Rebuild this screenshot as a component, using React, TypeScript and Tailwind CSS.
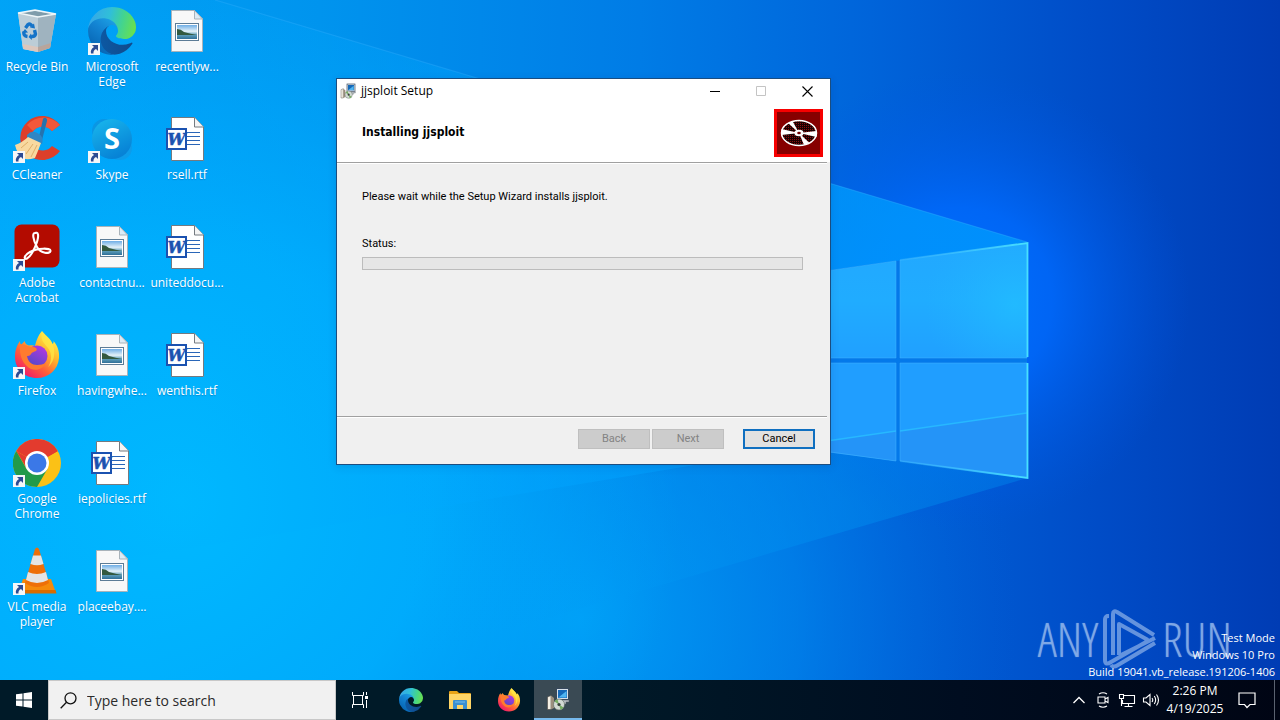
import type { ReactNode } from "react";

const ui = "font-['Open_Sans','Noto_Sans',sans-serif]";

function Wallpaper() {
  return (
    <svg className="absolute inset-0 h-full w-full" viewBox="0 0 1280 720" preserveAspectRatio="none" aria-hidden="true">
      <defs>
        <linearGradient id="wBase" x1="0" y1="0" x2="1280" y2="0" gradientUnits="userSpaceOnUse">
          <stop offset="0" stopColor="#00a2f6" />
          <stop offset="0.25" stopColor="#0094ee" />
          <stop offset="0.5" stopColor="#007ce6" />
          <stop offset="0.68" stopColor="#0064da" />
          <stop offset="0.85" stopColor="#004dc8" />
          <stop offset="1" stopColor="#003cb4" />
        </linearGradient>
        <radialGradient id="wLeft" cx="180" cy="500" r="500" gradientUnits="userSpaceOnUse">
          <stop offset="0" stopColor="#00b9ff" />
          <stop offset="0.5" stopColor="#00b2ff" stopOpacity="0.8" />
          <stop offset="1" stopColor="#00a8ff" stopOpacity="0" />
        </radialGradient>
        <radialGradient id="wBottom" cx="580" cy="620" r="440" gradientUnits="userSpaceOnUse">
          <stop offset="0" stopColor="#00a0f6" stopOpacity="0.9" />
          <stop offset="0.5" stopColor="#008cf0" stopOpacity="0.5" />
          <stop offset="1" stopColor="#0060d8" stopOpacity="0" />
        </radialGradient>
        <radialGradient id="wGlow" cx="960" cy="300" r="230" gradientUnits="userSpaceOnUse">
          <stop offset="0" stopColor="#0070ff" />
          <stop offset="0.4" stopColor="#006aff" stopOpacity="0.8" />
          <stop offset="1" stopColor="#0055e0" stopOpacity="0" />
        </radialGradient>
        <linearGradient id="wBeam" x1="190" y1="0" x2="1027" y2="0" gradientUnits="userSpaceOnUse">
          <stop offset="0" stopColor="#00b0ff" stopOpacity="0.1" />
          <stop offset="1" stopColor="#0096ff" stopOpacity="0.8" />
        </linearGradient>
        <linearGradient id="wLower" x1="400" y1="0" x2="1027" y2="0" gradientUnits="userSpaceOnUse">
          <stop offset="0" stopColor="#00a4f8" stopOpacity="0" />
          <stop offset="0.7" stopColor="#0090f0" stopOpacity="0.45" />
          <stop offset="1" stopColor="#0080e8" stopOpacity="0.5" />
        </linearGradient>
        <linearGradient id="wPaneTop" x1="0" y1="0" x2="0" y2="1">
          <stop offset="0" stopColor="#22a8ff" />
          <stop offset="0.5" stopColor="#20acff" />
          <stop offset="1" stopColor="#20a0ff" />
        </linearGradient>
        <radialGradient id="wShine" cx="1015" cy="305" r="90" gradientUnits="userSpaceOnUse">
          <stop offset="0" stopColor="#22c0ff" stopOpacity="0.7" />
          <stop offset="1" stopColor="#22b4ff" stopOpacity="0" />
        </radialGradient>
        <linearGradient id="wEdge" x1="900" y1="0" x2="1027" y2="0" gradientUnits="userSpaceOnUse">
          <stop offset="0" stopColor="#46c0ff" stopOpacity="0.2" />
          <stop offset="1" stopColor="#46e0ff" />
        </linearGradient>
      </defs>
      <rect width="1280" height="720" fill="url(#wBase)" />
      <rect width="1280" height="720" fill="url(#wBottom)" />
      <rect width="1280" height="720" fill="url(#wLeft)" />
      <rect width="1280" height="720" fill="url(#wGlow)" />
      <path d="M215 0L1027 242V478L200 720H0V0z" fill="url(#wLower)" />
      <path d="M215 0L1027 242V410L0 580V0z" fill="url(#wBeam)" />
      <path d="M215 0L1027 242" stroke="#3cb4ff" strokeOpacity="0.3" strokeWidth="1.2" />
      <path d="M896 261L1027 242V478L896 460L700 433V288z" fill="#0479ea" />
      <path d="M700 289L896 261V358H700zM900 260L1027 243V358H900z" fill="url(#wPaneTop)" />
      <path d="M900 260L1027 243V358H900z" fill="url(#wShine)" />
      <path d="M700 363H896V461L700 434zM900 363H1027V478L900 461z" fill="#209eff" />
      <path d="M700 459L896 431V461L700 436zM900 431L1027 413V478L900 461z" fill="#2494f8" />
      <path d="M820 442L896 431M900 431L1027 413" stroke="#27b8ff" strokeWidth="1.5" />
      <path d="M700 289L896 261V358H700zM900 260L1027 243V358H900zM700 363H896V461L700 434zM900 363H1027V478L900 461z" fill="none" stroke="#40b6ff" strokeOpacity="0.5" />
      <path d="M900 260L1027.500 243V357M1027.500 363V478L900 461" fill="none" stroke="url(#wEdge)" strokeWidth="1.800" />
    </svg>
  );
}

function Svg({ size, box = 48, children }: { size: number; box?: number; children: ReactNode }) {
  return (
    <svg width={size} height={size} viewBox={`0 0 ${box} ${box}`} className="shrink-0" aria-hidden="true">
      {children}
    </svg>
  );
}

function RecycleBin() {
  return (
    <Svg size={48}>
      <path d="M5 6L22 3L43 7L37 41L25 45L10 42z" fill="#b9cfda" />
      <path d="M5 6L25 10L25 45L10 42z" fill="#bccdd7" />
      <path d="M25 10L43 7L37 41L25 45z" fill="#9fb3bf" />
      <path d="M7 6.500L22 4L41 7.500L25 9.500z" fill="#7f9cab" />
      <path d="M5 6L22 3L43 7L25 10z" fill="none" stroke="#eef5f8" strokeWidth="1.300" />
      <path d="M9.500 37L25 40V45L10.500 42z" fill="#dcc7bd" />
      <path d="M25 40L38 36L37 41L25 45z" fill="#b8a59c" />
      <g fill="none" stroke="#1473c8" strokeWidth="3.400">
        <path d="M12.500 21L15 17.500Q17 16 19 19" />
        <path d="M21.500 23L22.500 27Q22 30 18 29.500" />
        <path d="M14.500 29.500Q10 29 11 24.500" />
      </g>
      <path d="M17 20.500L22 21.500L21 16.500zM18 26.500L15.500 30L19 33zM9 26L12 22L15 25.500z" fill="#1473c8" />
    </Svg>
  );
}

function EdgeLogo({ size }: { size: number }) {
  return (
    <Svg size={size} box={256}>
      <defs>
        <linearGradient id="eA" x1="60" y1="180" x2="235" y2="180" gradientUnits="userSpaceOnUse">
          <stop offset="0" stopColor="#0c59a4" />
          <stop offset="1" stopColor="#114a8b" />
        </linearGradient>
        <linearGradient id="eB" x1="150" y1="90" x2="45" y2="230" gradientUnits="userSpaceOnUse">
          <stop offset="0" stopColor="#1b9de2" />
          <stop offset="0.4" stopColor="#1383d2" />
          <stop offset="1" stopColor="#0766b4" />
        </linearGradient>
        <linearGradient id="eC" x1="10" y1="70" x2="245" y2="130" gradientUnits="userSpaceOnUse">
          <stop offset="0" stopColor="#35a8e8" />
          <stop offset="0.4" stopColor="#30bfd8" />
          <stop offset="0.7" stopColor="#43d48f" />
          <stop offset="1" stopColor="#68e050" />
        </linearGradient>
      </defs>
      <path fill="url(#eA)" d="M231 190.500c-3.400 1.800-6.900 3.400-10.500 4.700a101.600 101.600 0 0 1-35.900 6.500c-47.300 0-88.500-32.500-88.500-74.300 0-11.400 6.300-21.900 16.400-27.300-42.800 1.800-53.800 46.400-53.800 72.500 0 73.900 68.100 81.400 82.800 81.400 7.900 0 19.800-2.300 27-4.600l1.300-.4a128.300 128.300 0 0 0 66.600-52.800 4 4 0 0 0-5.400-5.700z" />
      <path fill="url(#eB)" d="M105.700 241.400a79.200 79.200 0 0 1-22.700-21.300 80.700 80.700 0 0 1 29.500-120c3.200-1.500 8.500-4.100 15.600-4a32.400 32.400 0 0 1 25.700 13 31.900 31.900 0 0 1 6.300 18.700c0-.2 24.500-79.600-80-79.600-43.900 0-80 41.700-80 78.200a130.200 130.200 0 0 0 12.100 56 128 128 0 0 0 156.400 67 75.500 75.500 0 0 1-62.800-8z" />
      <path fill="url(#eC)" d="M152.300 148.900c-.8 1-3.300 2.500-3.300 5.700 0 2.600 1.700 5.100 4.700 7.200 14.400 10 41.500 8.700 41.600 8.700 10.700 0 21.100-2.900 30.300-8.300a61.400 61.400 0 0 0 30.400-52.900c.3-22.400-8-37.300-11.300-43.900C223.500 23.900 177.700 0 128 0A128 128 0 0 0 0 126.200c.5-36.500 36.800-66 80-66 3.500 0 23.500.3 42 10.100 16.300 8.600 24.900 18.900 30.800 29.200 6.200 10.700 7.300 24.100 7.300 29.500s-2.700 13.300-7.800 19.900z" />
    </Svg>
  );
}

function FirefoxLogo({ size }: { size: number }) {
  return (
    <Svg size={size}>
      <defs>
        <linearGradient id="fA" x1="40" y1="6" x2="10" y2="44" gradientUnits="userSpaceOnUse">
          <stop offset="0" stopColor="#fff04a" />
          <stop offset="0.35" stopColor="#ffb22c" />
          <stop offset="0.65" stopColor="#ff6038" />
          <stop offset="1" stopColor="#f0186c" />
        </linearGradient>
        <linearGradient id="fB" x1="30" y1="16" x2="20" y2="34" gradientUnits="userSpaceOnUse">
          <stop offset="0" stopColor="#b038e0" />
          <stop offset="1" stopColor="#5a48c8" />
        </linearGradient>
      </defs>
      <path d="M29 0C33 5 38 8 39.500 13C41 12.500 40.500 10 40.500 10C45 15 46.500 21 46 27C45 39 35.500 47 24 47C11.500 47 2 38 2 26C2 19 4 14 7 10C7 12 7.500 13 8 14C10 11.500 11 11 11.500 10C12.500 13 14 14 16 14.500C19 14 21 15 22 15C23 11 25 4 29 0z" fill="url(#fA)" />
      <circle cx="24" cy="25" r="10.500" fill="url(#fB)" />
      <path d="M7 13C12 13 15 16 19 16C23 16 25 18 23 20C21 21 19 21 18 23C17 25 15 25 14 25C15 31 19 34 24 34C28 34 30 33 33 32C30 38 24 40 18 38C10 34 6 25 7 13z" fill="#ff7b2e" />
      <path d="M29 1C27 9 31 12 35 17C39 22 39 30 35 36C43 30 42 18 39.500 13C38 9 34 6 29 1z" fill="#ffe745" opacity="0.75" />
    </Svg>
  );
}

function CCleaner() {
  return (
    <Svg size={48}>
      <path d="M47 10A22 22 0 1 0 47 36L39 31A12 12 0 1 1 39 16z" fill="#dd3f2a" />
      <path d="M47 10A22 22 0 0 0 14 10L20 16A13 13 0 0 1 39 16z" fill="#f2583a" />
      <path d="M26 22L30 4Q31 2 33 3Q34.500 4 34 6L29 25z" fill="#2573ae" />
      <path d="M14 20Q19 14 26 19Q31 22 29 29L14 25z" fill="#2f86c4" />
      <path d="M2 30Q10 27 15 22L28 28Q25 36 22 43Q12 46 8 42Q4 38 2 30z" fill="#f8d9a0" />
      <path d="M8 33L15 27M13 39L20 29M18 42L24 30" stroke="#dfae68" />
    </Svg>
  );
}

function Skype() {
  return (
    <Svg size={48}>
      <defs>
        <linearGradient id="sA" x1="0" y1="0" x2="0.500" y2="1">
          <stop offset="0" stopColor="#19b9ee" />
          <stop offset="1" stopColor="#0783d6" />
        </linearGradient>
      </defs>
      <circle cx="16" cy="16" r="12" fill="#0a96e4" />
      <circle cx="32" cy="33" r="12" fill="#0d9cea" />
      <circle cx="24" cy="24" r="20" fill="url(#sA)" />
      <text x="24" y="34" textAnchor="middle" fontSize="29" fontWeight="700" fill="#fff" fontFamily="Open Sans, sans-serif">S</text>
    </Svg>
  );
}

function Acrobat() {
  return (
    <Svg size={48}>
      <rect x="1.500" y="1.500" width="45" height="43" rx="7" fill="#b30b00" />
      <path d="M22 10C19 9.500 20 17 24 24C28 31 37 31 37.500 28C38 24.500 24 25 17 29C10 33 11 37 14 35.500C19 33 26 17 25 11.500C24.500 9.500 23 9.500 22 10z" fill="none" stroke="#fff" strokeWidth="2.100" />
    </Svg>
  );
}

function Chrome() {
  return (
    <Svg size={48}>
      <circle cx="24" cy="24" r="24" fill="#fbc116" />
      <path d="M24 24L3.200 12A24 24 0 0 1 44.800 12z" fill="#e33b2e" />
      <path d="M24 12H44.800L24 24zM3.200 12L14 30L24 24z" fill="#e33b2e" />
      <path d="M3.200 12A24 24 0 0 0 24 48L34.400 30L24 24L13.600 30z" fill="#229a4a" />
      <circle cx="24" cy="24" r="12" fill="#fff" />
      <circle cx="24" cy="24" r="9.500" fill="#3b78e7" />
    </Svg>
  );
}

function Vlc() {
  return (
    <Svg size={48}>
      <path d="M10 32H38L43 46H5z" fill="#f58a0b" />
      <path d="M6 43H42.500L43.500 46.500H5z" fill="#d96c00" />
      <path d="M22 2Q24 -1 26 2L36 36Q24 44 12 36z" fill="#ee6f08" />
      <path d="M20 8.500H28L30.500 17Q24 19.500 17.500 17zM15 25Q24 29 33 25L35 33Q24 39 13 33z" fill="#e4e4e4" />
    </Svg>
  );
}

function WordDoc() {
  return (
    <Svg size={48}>
      <path d="M8.500 2.500H31.500L40.500 12V45.500H8.500z" fill="#fff" stroke="#747a80" />
      <path d="M31.500 2.500V12H40.500" fill="#f4f4f4" stroke="#747a80" />
      <path d="M24 17.500H37M24 21.500H37M24 25.500H37M24 29.500H37" stroke="#2a66b8" />
      <rect x="4" y="14" width="19" height="20" fill="#fff" stroke="#1b52b0" strokeWidth="2" />
      <text x="13.500" y="30" textAnchor="middle" fontSize="16" fontWeight="700" fontStyle="italic" fill="#1b52b0" stroke="#1b52b0" strokeWidth="0.500" fontFamily="DejaVu Serif, serif">W</text>
    </Svg>
  );
}

function PictureDoc() {
  return (
    <Svg size={48}>
      <defs>
        <linearGradient id="pSky" x1="0" y1="0" x2="0" y2="1">
          <stop offset="0" stopColor="#6faee6" />
          <stop offset="0.450" stopColor="#e4f1f8" />
          <stop offset="0.700" stopColor="#5f9fba" />
          <stop offset="1" stopColor="#2f6f98" />
        </linearGradient>
      </defs>
      <path d="M8.500 3.500H31.500L39.500 12V44.500H8.500z" fill="#f8f8f8" stroke="#a9b3ba" />
      <path d="M31.500 3.500V12H39.500z" fill="#dcebf5" stroke="#a9b3ba" />
      <rect x="12.500" y="16.500" width="23" height="17" fill="#fff" stroke="#5d7c96" />
      <rect x="14" y="18" width="20" height="14" fill="url(#pSky)" />
      <path d="M14 22Q18 22 21 25Q28 27 34 28H14z" fill="#33593f" />
    </Svg>
  );
}

function Shortcut() {
  return (
    <svg className="absolute bottom-0 left-0" width="12" height="12" viewBox="0 0 12 12" aria-hidden="true">
      <rect width="12" height="12" fill="#f5f6f8" />
      <path d="M4 2H10V8L8 6Q5 7.500 5.500 10.500H3Q2 6.500 6 4z" fill="#2c4b93" />
    </svg>
  );
}

function InstallerIcon({ size }: { size: number }) {
  return (
    <Svg size={size} box={24}>
      <rect x="10.500" y="1.500" width="12" height="11" fill="#d8e0e8" stroke="#38485c" />
      <rect x="12" y="3" width="9" height="8" fill="#1468b8" />
      <path d="M13 10L20.500 4V10.500H12z" fill="#4fb4f0" />
      <path d="M13 13H23V15H20V17H12z" fill="#b7bcc2" stroke="#505860" strokeWidth="0.500" />
      <path d="M1.500 10L5 8.500V22.500H1.500z" fill="#f4efe4" stroke="#4d4a45" strokeWidth="0.600" />
      <path d="M5 8.500L8 11V21L5 22.500z" fill="#9b8e7e" />
      <circle cx="13" cy="17.500" r="5.500" fill="#d3dad4" stroke="#59645c" strokeWidth="0.600" />
      <path d="M13 17.500L8.500 14.500A5.500 5.500 0 0 1 11.500 12.300zM13 17.500L17.500 20.500A5.500 5.500 0 0 1 14.500 22.800z" fill="#76ad62" />
      <circle cx="13" cy="17.500" r="1.600" fill="#37413a" />
    </Svg>
  );
}

type Item = { name: string; icon: ReactNode; shortcut?: boolean };

const items: Item[] = [
  { name: "Recycle Bin", icon: <RecycleBin /> },
  { name: "CCleaner", icon: <CCleaner />, shortcut: true },
  { name: "Adobe Acrobat", icon: <Acrobat />, shortcut: true },
  { name: "Firefox", icon: <FirefoxLogo size={48} />, shortcut: true },
  { name: "Google Chrome", icon: <Chrome />, shortcut: true },
  { name: "VLC media player", icon: <Vlc />, shortcut: true },
  { name: "Microsoft Edge", icon: <EdgeLogo size={48} />, shortcut: true },
  { name: "Skype", icon: <Skype />, shortcut: true },
  { name: "contactnu...", icon: <PictureDoc /> },
  { name: "havingwhe...", icon: <PictureDoc /> },
  { name: "iepolicies.rtf", icon: <WordDoc /> },
  { name: "placeebay....", icon: <PictureDoc /> },
  { name: "recentlyw...", icon: <PictureDoc /> },
  { name: "rsell.rtf", icon: <WordDoc /> },
  { name: "uniteddocu...", icon: <WordDoc /> },
  { name: "wenthis.rtf", icon: <WordDoc /> },
];

function DesktopIcons() {
  return (
    <div className="grid w-max auto-cols-[75px] grid-flow-col grid-rows-[repeat(6,108px)]">
      {items.map((it) => (
        <button key={it.name} type="button" className="flex flex-col items-center pr-px pt-[7px] text-[12px] leading-[15px] text-white">
          <span className="relative block">
            {it.icon}
            {it.shortcut && <Shortcut />}
          </span>
          <span className="mt-1 px-[2px] text-center [text-shadow:0_1px_1px_rgba(0,50,110,0.3)]">{it.name}</span>
        </button>
      ))}
    </div>
  );
}

function DiscBadge() {
  return (
    <svg width="49" height="48" viewBox="0 0 49 48" aria-hidden="true">
      <defs>
        <pattern id="dots" width="2" height="2" patternUnits="userSpaceOnUse">
          <rect width="2" height="2" fill="#1c0000" />
          <rect width="1" height="1" fill="#8a1010" />
        </pattern>
      </defs>
      <rect width="49" height="48" fill="#f60000" />
      <rect x="3" y="3" width="43" height="42" fill="#860000" />
      <ellipse cx="25" cy="24" rx="17.500" ry="12.500" fill="url(#dots)" stroke="#fff" strokeWidth="1.500" />
      <path d="M25 24L7.500 20V26zM25 24L14 14L18.500 12zM25 24L42.500 22V28zM25 24L30 36L35.500 34z" fill="#fff" />
      <ellipse cx="25" cy="24" rx="4.500" ry="3.200" fill="#fff" />
      <ellipse cx="25" cy="24" rx="1.800" ry="1.300" fill="#700000" />
    </svg>
  );
}

function SetupWindow() {
  const btn = "h-5 w-[72px] text-center leading-[18px]";
  return (
    <section
      aria-label="jjsploit Setup"
      className="absolute left-[336px] top-[78px] flex w-[495px] flex-col border border-[#1b4d80] bg-[#f0f0f0] font-['Roboto','Liberation_Sans',sans-serif] text-[11px] text-black shadow-[0_2px_8px_rgba(0,40,100,0.15)]"
    >
      <header className="flex h-6 items-center bg-white pl-[3px]">
        <InstallerIcon size={16} />
        <h1 className={`ml-[5px] flex-1 text-[12px] ${ui}`}>jjsploit Setup</h1>
        <button type="button" aria-label="Minimize" className="flex h-6 w-[45px] items-center justify-center">
          <svg width="11" height="11"><path d="M0 5.500H10" stroke="#000" /></svg>
        </button>
        <button type="button" aria-label="Maximize" disabled className="flex h-6 w-[46px] items-center justify-center">
          <svg width="11" height="11"><path d="M.5.5H9.500V9.500H.5z" fill="none" stroke="#c4c4c4" /></svg>
        </button>
        <button type="button" aria-label="Close" className="flex h-6 w-[46px] items-center justify-center">
          <svg width="11" height="11"><path d="M.5.5L10.500 10.500M10.500.5L.5 10.500" stroke="#000" strokeWidth="1.100" /></svg>
        </button>
      </header>
      <div className="flex h-[59px] items-start justify-between bg-white pl-[25px] pr-[7px] pt-[6px]">
        <h2 className="pt-4 font-['DejaVu_Sans_Condensed','DejaVu_Sans',sans-serif] text-[12px] font-bold leading-[14px]">Installing jjsploit</h2>
        <DiscBadge />
      </div>
      <div className="mr-[3px] h-[2px] border-b border-t border-b-white border-t-[#a0a0a0]" />
      <div className="h-[252px] pl-[25px] pr-[27px] pt-[26px]">
        <p className="leading-[14px]">Please wait while the Setup Wizard installs jjsploit.</p>
        <p id="status" className="mt-[33px] leading-[14px]">Status:</p>
        <div role="progressbar" aria-labelledby="status" className="mt-[6px] h-[13px] border border-[#bcbcbc] bg-[#e6e6e6]" />
      </div>
      <div className="mr-[3px] h-[2px] border-b border-t border-b-white border-t-[#a0a0a0]" />
      <footer className="flex justify-end pb-[15px] pr-[15px] pt-[11px]">
        <button type="button" disabled className={`${btn} border border-[#bfbfbf] bg-[#cccccc] text-[#838383]`}>Back</button>
        <button type="button" disabled className={`${btn} ml-[2px] border border-[#bfbfbf] bg-[#cccccc] text-[#838383]`}>Next</button>
        <button type="button" className={`${btn} ml-[19px] border-2 border-[#0f6fc0] bg-[#e1e1e1] !leading-[16px]`}>Cancel</button>
      </footer>
    </section>
  );
}

function Watermark() {
  const word = "text-[48px] leading-[56px] font-light [text-shadow:0_0_1px_currentColor] font-['Open_Sans_Condensed_Light','Open_Sans_Condensed','Roboto_Condensed','Liberation_Sans_Narrow',sans-serif]";
  return (
    <div className="absolute bottom-[11px] right-[48px] flex items-center text-[#8fb4ea]/70">
      <span className={word}>ANY</span>
      <svg className="mx-1" width="56" height="60" viewBox="0 0 56 60" fill="none" stroke="currentColor" strokeWidth="4" strokeLinejoin="round" aria-hidden="true">
        <path d="M7 7H5Q3 8 3 11V51Q3 57 9 53L44 33M17 46V15L46 31M11 46V5Q11 1 15 3L52 26M17 47L53 29M9 56Q11 59 16 56L53 34" />
      </svg>
      <span className={word}>RUN</span>
    </div>
  );
}

function TrayIcon({ label, children }: { label: string; children: ReactNode }) {
  return (
    <button type="button" aria-label={label} className="flex h-full w-6 items-center justify-center">
      <svg width="18" height="18" viewBox="0 0 18 18" fill="none" stroke="#fff" strokeWidth="1.100" aria-hidden="true">
        {children}
      </svg>
    </button>
  );
}

function Taskbar() {
  const task = "flex h-full w-12 items-center justify-center";
  return (
    <footer className="relative flex h-10 bg-[linear-gradient(90deg,#001a28_0%,#001a28_45%,#000d20_75%,#000514_100%)] text-white">
      <button type="button" aria-label="Start" className={task}>
        <svg width="16" height="16" viewBox="0 0 16 16" fill="#fff"><path d="M0 2.300L6.500 1.400V7.500H0zM7.500 1.200L16 0V7.500H7.500zM0 8.500H6.500V14.600L0 13.700zM7.500 8.500H16V16L7.500 14.800z" /></svg>
      </button>
      <label className="flex w-[288px] items-center border border-[#c8c8c8] bg-[#f1f1f1] pl-[11px] text-black">
        <svg width="17" height="17" viewBox="0 0 17 17" fill="none" stroke="#111" strokeWidth="1.300" aria-hidden="true"><circle cx="10.500" cy="6.300" r="5.500" /><path d="M6.500 10.300L.7 16.200" /></svg>
        <input aria-label="Search" placeholder="Type here to search" className="ml-[10px] min-w-0 flex-1 bg-transparent text-[14px] outline-none placeholder:text-[#2b2b2b]" />
      </label>
      <button type="button" aria-label="Task View" className={task}>
        <svg width="16" height="16" viewBox="0 0 16 16" fill="none" stroke="#fff"><path d="M.5 0V3.500H11.500V0M.5 16V12.500H11.500V16M1.500 3.500V12.500M10.500 3.500V12.500M14.500 0V3M14.500 8V16" /><rect x="13" y="4" width="3" height="3" fill="#fff" stroke="none" /></svg>
      </button>
      <div className="ml-[3px] flex gap-px">
        <button type="button" aria-label="Microsoft Edge" className={task}><EdgeLogo size={24} /></button>
        <button type="button" aria-label="File Explorer" className={task}>
          <Svg size={24} box={24}>
            <path d="M1 4Q1 3 2 3H9L11 5H22Q23 5 23 6V20H1z" fill="#e8a317" />
            <path d="M1 6H23V21H1z" fill="#ffd566" />
            <path d="M5 13Q5 12 6 12H18Q19 12 19 13V21H15V17H9V21H5z" fill="#3b8fd0" />
            <path d="M7 14H17" stroke="#76bdec" />
          </Svg>
        </button>
        <button type="button" aria-label="Firefox" className={task}><FirefoxLogo size={24} /></button>
        <button type="button" aria-label="jjsploit Setup" className={`${task} border-b-2 border-[#76b9ed] bg-[#3a4a54]`}><InstallerIcon size={24} /></button>
      </div>
      <div className="ml-auto flex items-center">
        <TrayIcon label="Show hidden icons"><path d="M3.500 12L9 6.500L14.500 12" strokeWidth="1.300" /></TrayIcon>
        <TrayIcon label="Meet Now"><path d="M4 6H11V12H4zM11 8L14 6.500V11.500L11 10M5 3Q9 .5 13 3M5 15Q9 17.500 13 15" /></TrayIcon>
        <TrayIcon label="Network"><path d="M6 4.500H16.500V12.500H4.500V9M10.500 12.500V15.500M6.500 15.500H14.500M1.500 3.500H5.500V7.500H1.500zM3.500 7.500V15" /></TrayIcon>
        <TrayIcon label="Volume"><path d="M1.500 7H4L8 3.500V14.500L4 11H1.500zM10 7Q11.500 9 10 11M12.300 5Q15 9 12.300 13M14.500 3.500Q18.500 9 14.500 14.500" /></TrayIcon>
        <div className="w-16 text-center text-[12px] leading-[18px]">
          <p>2:26 PM</p>
          <p>4/19/2025</p>
        </div>
        <button type="button" aria-label="Notifications" className="flex h-full w-12 items-center justify-center border-r border-[#5a6270] pr-2">
          <svg width="18" height="18" viewBox="0 0 18 18" fill="none" stroke="#fff" strokeWidth="1.200"><path d="M1 2H17V13.500H12L9 16.500L6.500 13.500H1z" /></svg>
        </button>
        <span className="w-[5px]" />
      </div>
    </footer>
  );
}

export default function App() {
  return (
    <div className={`relative flex min-h-screen flex-col overflow-hidden bg-[#0078d7] ${ui}`}>
      <Wallpaper />
      <main className="relative flex-1">
        <DesktopIcons />
        <Watermark />
        <div className="absolute bottom-0 right-[5px] text-right text-[11px] leading-[17px] text-white">
          <p>Test Mode</p>
          <p>Windows 10 Pro</p>
          <p>Build 19041.vb_release.191206-1406</p>
        </div>
        <SetupWindow />
      </main>
      <Taskbar />
    </div>
  );
}
